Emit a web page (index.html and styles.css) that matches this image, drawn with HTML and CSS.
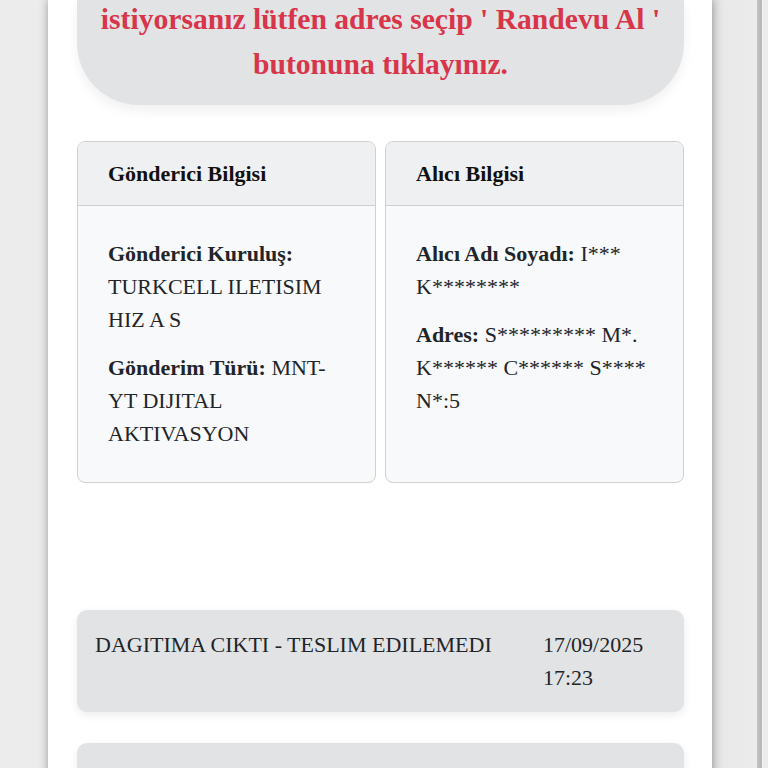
FILE: index.html
```html
<!DOCTYPE html>
<html lang="tr">
<head>
<meta charset="utf-8">
<title>Gönderi Takip</title>
<link rel="stylesheet" href="styles.css">
</head>
<body>
<div class="page">
  <main class="panel">
    <div class="notice">
      <p>istiyorsanız lütfen adres seçip ' Randevu Al ' butonuna tıklayınız.</p>
    </div>

    <div class="cards">
      <section class="card">
        <header class="card-header">Gönderici Bilgisi</header>
        <div class="card-body">
          <p><strong>Gönderici Kuruluş:</strong> TURKCELL ILETISIM HIZ A S</p>
          <p><strong>Gönderim Türü:</strong> MNT-YT DIJITAL AKTIVASYON</p>
        </div>
      </section>
      <section class="card">
        <header class="card-header">Alıcı Bilgisi</header>
        <div class="card-body">
          <p><strong>Alıcı Adı Soyadı:</strong> I*** K********</p>
          <p><strong>Adres:</strong> S********* M*. K****** C****** S**** N*:5</p>
        </div>
      </section>
    </div>

    <div class="timeline">
      <div class="event">
        <div class="event-text">DAGITIMA CIKTI - TESLIM EDILEMEDI</div>
        <div class="event-date">17/09/2025 17:23</div>
      </div>
      <div class="event">
        <div class="event-text">&nbsp;</div>
        <div class="event-date">&nbsp;</div>
      </div>
    </div>
  </main>
  <div class="gutter"></div>
  <div class="edge"></div>
</div>
</body>
</html>
```

FILE: styles.css
```css
html, body {
  margin: 0;
  padding: 0;
  height: 100%;
  overflow: hidden;
}

body {
  background: #ececec;
  font-family: "Liberation Serif", "Times New Roman", serif;
  color: #212529;
}

.page {
  display: flex;
  min-height: 100%;
  padding-left: 48px;
}

.panel {
  width: 607px;
  flex: none;
  background: #ffffff;
  padding: 0 28px 0 29px;
  box-shadow: 0 0 9px rgba(0, 0, 0, 0.35);
  position: relative;
  z-index: 1;
}

.gutter {
  width: 45px;
  flex: none;
  background: linear-gradient(to right, #dcdcdc 0, #e9e9e9 12px, #ececec 100%);
}

.edge {
  width: 5px;
  flex: none;
  background: linear-gradient(to right, #c4c4c4, #b5b5b5);
  border-right: 1px solid #f6f6f6;
}

.notice {
  margin-top: -3px;
  background: #e2e3e5;
  border-radius: 0 0 62px 62px;
  padding: 0 20px 18px;
  box-shadow: 0 6px 12px rgba(0, 0, 0, 0.06);
}

.notice p {
  margin: 0;
  text-align: center;
  color: #d9354a;
  font-weight: bold;
  font-size: 29.6px;
  line-height: 45px;
}

.cards {
  margin-top: 36px;
  display: grid;
  grid-template-columns: 1fr 1fr;
  gap: 9px;
}

.card {
  border: 1px solid #cfd0d2;
  border-radius: 8px;
  background: #f8f9fa;
  overflow: hidden;
  font-size: 22px;
  line-height: 33px;
}

.card-header {
  background: #eff0f2;
  border-bottom: 1px solid #cfd0d2;
  padding: 15px 30px;
  font-weight: bold;
  color: #111111;
}

.card-body {
  padding: 31px 30px 32px;
}

.card-body p {
  margin: 0 0 15px;
}

.card-body p:last-child {
  margin-bottom: 0;
}

.timeline {
  margin-top: 127px;
  display: flex;
  flex-direction: column;
  gap: 31px;
}

.event {
  display: flex;
  background: #e2e3e5;
  border-radius: 10px;
  padding: 18px;
  box-shadow: 0 3px 8px rgba(0, 0, 0, 0.08);
  font-size: 22px;
  line-height: 33px;
}

.event-text {
  flex: 1;
}

.event-date {
  width: 123px;
  flex: none;
}
```
